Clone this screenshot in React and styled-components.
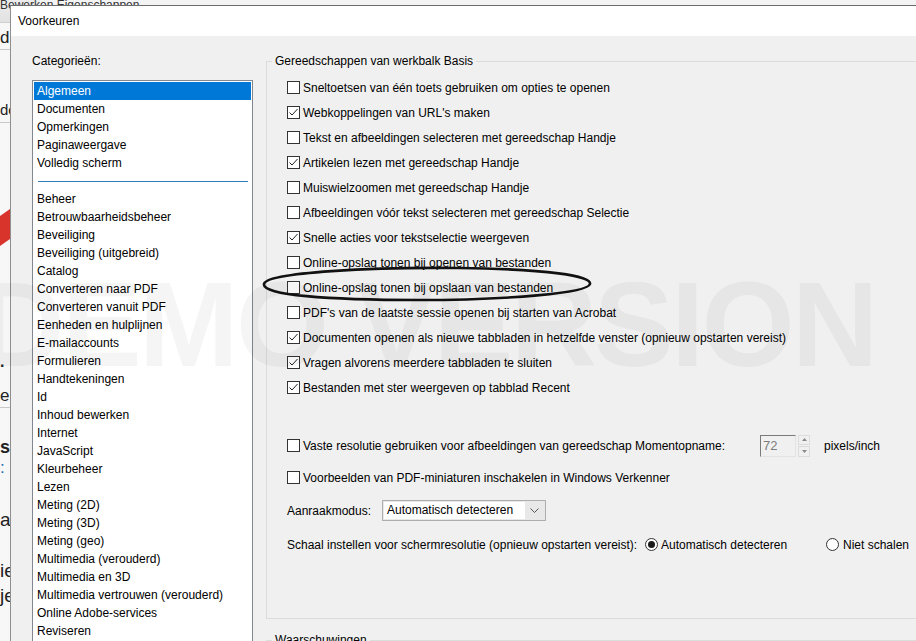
import React from "react";
import styled, { createGlobalStyle } from "styled-components";

const GlobalStyle = createGlobalStyle`
  html, body {
    margin: 0;
    padding: 0;
    background: #f0f0f0;
  }
`;

const Desktop = styled.div`
  position: relative;
  width: 916px;
  height: 641px;
  overflow: hidden;
  background: #f3f3f3;
  font-family: "Liberation Sans", Arial, sans-serif;
  font-size: 12px;
  color: #000;
`;

/* application window behind the dialog, only its left edge shows */
const BackApp = styled.div`
  display: flex;
  flex-direction: column;
  width: 40px;
  height: 100%;
  background: #f7f7f7;
`;

const BackMenu = styled.div`
  height: 22px;
  background: linear-gradient(#ececec, #e2e2e2);
  border-bottom: 1px solid #cfcfcf;
  font-size: 12px;
  line-height: 10px;
  color: #333;
  white-space: nowrap;
`;

const BackLine = styled.div`
  margin-top: ${(p) => p.$mt || 0}px;
  height: ${(p) => p.$h || 20}px;
  line-height: ${(p) => p.$h || 20}px;
  font-size: ${(p) => p.$size || 14}px;
  font-weight: ${(p) => (p.$bold ? 700 : 400)};
  color: ${(p) => p.$color || "#222"};
  border-bottom: ${(p) => (p.$rule ? "1px solid #c8c8c8" : "none")};
  white-space: nowrap;
  overflow: hidden;
`;

const RedMark = styled.div`
  margin-top: ${(p) => p.$mt}px;
  width: 26px;
  height: 30px;
  background: #d8342c;
  transform: skewY(-35deg);
  margin-left: -6px;
`;

const Dialog = styled.div`
  position: absolute;
  left: 10px;
  top: 5px;
  width: 940px;
  height: 680px;
  display: flex;
  flex-direction: column;
  background: #f0f0f0;
  border-top: 1px solid #6b6b6b;
  border-left: 1px solid #8e8e8e;
`;

const TitleBar = styled.div`
  height: 30px;
  flex: none;
  display: flex;
  align-items: center;
  padding-left: 7px;
  background: #fff;
  font-size: 12px;
`;

const Body = styled.div`
  flex: 1;
  display: flex;
  align-items: flex-start;
  gap: 13px;
  padding: 17px 0 0 21px;
`;

const LeftCol = styled.div`
  width: 221px;
  flex: none;
  display: flex;
  flex-direction: column;
`;

const Label = styled.div`
  height: 16px;
  line-height: 16px;
  margin-bottom: 11px;
`;

const ListBox = styled.div`
  height: 600px;
  background: #fff;
  border: 1px solid #828790;
  padding: 1px;
`;

const ListItem = styled.div`
  height: 18px;
  line-height: 18px;
  padding-left: 3px;
  white-space: nowrap;
  background: ${(p) => (p.$selected ? "#0078d7" : "transparent")};
  color: ${(p) => (p.$selected ? "#fff" : "#000")};
`;

const ListSeparator = styled.div`
  height: 18px;
  display: flex;
  align-items: center;
  padding: 0 3px 0 4px;

  &::after {
    content: "";
    flex: 1;
    height: 1px;
    background: #2f80bd;
  }
`;

const RightCol = styled.div`
  flex: none;
  display: flex;
  flex-direction: column;
  gap: 13px;
`;

const GroupBox = styled.fieldset`
  box-sizing: border-box;
  margin: 0;
  width: 700px;
  height: ${(p) => p.$h || 566}px;
  border: 1px solid #dcdcdc;
  padding: 6px 0 0 5px;
`;

const Legend = styled.legend`
  padding: 0 3px;
  height: 16px;
  line-height: 16px;
`;

const Options = styled.div`
  display: flex;
  flex-direction: column;
  padding-left: 15px;
`;

const Row = styled.div`
  height: 25px;
  display: flex;
  align-items: center;
  margin-top: ${(p) => p.$mt || 0}px;
  white-space: nowrap;
`;

const Box = styled.span`
  width: 13px;
  height: 13px;
  box-sizing: border-box;
  flex: none;
  border: 1px solid #333;
  background: #fff;
  display: flex;
  align-items: center;
  justify-content: center;
  margin-right: 3px;
`;

const RowText = styled.span`
  width: ${(p) => (p.$w ? `${p.$w}px` : "auto")};
  flex: none;
`;

const SpinField = styled.div`
  width: 36px;
  height: 22px;
  box-sizing: border-box;
  border: 1px solid #e3e3e3;
  border-top-color: #7a7a7a;
  border-left-color: #7a7a7a;
  background: #f0f0f0;
  color: #7d7d7d;
  line-height: 20px;
  padding-left: 2px;
  font-size: 13px;
`;

const SpinButtons = styled.div`
  width: 12px;
  height: 22px;
  margin-left: 2px;
  display: flex;
  flex-direction: column;
  gap: 1px;
  margin-right: 14px;
`;

const SpinHalf = styled.div`
  flex: 1;
  border: 1px solid #dcdcdc;
  display: flex;
  align-items: center;
  justify-content: center;
`;

const Select = styled.div`
  width: 164px;
  height: 21px;
  box-sizing: border-box;
  border: 1px solid #adadad;
  background: #e8e8e8;
  display: flex;
  align-items: center;
  padding: 1px;
`;

const SelectValue = styled.div`
  width: 141px;
  height: 100%;
  background: #fff;
  line-height: 17px;
  padding-left: 3px;
  box-sizing: border-box;
`;

const SelectArrow = styled.div`
  flex: 1;
  display: flex;
  align-items: center;
  justify-content: center;
`;

const Radio = styled.span`
  width: 13px;
  height: 13px;
  box-sizing: border-box;
  border: 1px solid #333;
  border-radius: 50%;
  background: #fff;
  display: flex;
  align-items: center;
  justify-content: center;
  margin-right: ${(p) => p.$gap || 3}px;
  flex: none;

  &::after {
    content: "";
    display: ${(p) => (p.$on ? "block" : "none")};
    width: 7px;
    height: 7px;
    border-radius: 50%;
    background: #1a1a1a;
  }
`;

const Watermark = styled.div`
  position: absolute;
  left: -22px;
  top: 264px;
  font-family: "Liberation Sans", Arial, sans-serif;
  font-weight: 700;
  font-size: 120px;
  line-height: 120px;
  letter-spacing: -3px;
  color: rgba(0, 0, 0, 0.04);
  white-space: nowrap;
  pointer-events: none;
`;

const Annotation = styled.svg`
  position: absolute;
  left: 258px;
  top: 262px;
  pointer-events: none;
`;

const Check = () => (
  <svg width="11" height="11" viewBox="0 0 11 11">
    <path d="M1.5 5.5 L4 8 L9.5 2" fill="none" stroke="#222" strokeWidth="1" />
  </svg>
);

const CheckBox = ({ on }) => <Box>{on ? <Check /> : null}</Box>;

const categoriesTop = [
  "Algemeen",
  "Documenten",
  "Opmerkingen",
  "Paginaweergave",
  "Volledig scherm",
];

const categories = [
  "Beheer",
  "Betrouwbaarheidsbeheer",
  "Beveiliging",
  "Beveiliging (uitgebreid)",
  "Catalog",
  "Converteren naar PDF",
  "Converteren vanuit PDF",
  "Eenheden en hulplijnen",
  "E-mailaccounts",
  "Formulieren",
  "Handtekeningen",
  "Id",
  "Inhoud bewerken",
  "Internet",
  "JavaScript",
  "Kleurbeheer",
  "Lezen",
  "Meting (2D)",
  "Meting (3D)",
  "Meting (geo)",
  "Multimedia (verouderd)",
  "Multimedia en 3D",
  "Multimedia vertrouwen (verouderd)",
  "Online Adobe-services",
  "Reviseren",
];

const options = [
  [false, "Sneltoetsen van één toets gebruiken om opties te openen"],
  [true, "Webkoppelingen van URL's maken"],
  [false, "Tekst en afbeeldingen selecteren met gereedschap Handje"],
  [true, "Artikelen lezen met gereedschap Handje"],
  [false, "Muiswielzoomen met gereedschap Handje"],
  [false, "Afbeeldingen vóór tekst selecteren met gereedschap Selectie"],
  [true, "Snelle acties voor tekstselectie weergeven"],
  [false, "Online-opslag tonen bij openen van bestanden"],
  [false, "Online-opslag tonen bij opslaan van bestanden"],
  [false, "PDF's van de laatste sessie openen bij starten van Acrobat"],
  [true, "Documenten openen als nieuwe tabbladen in hetzelfde venster (opnieuw opstarten vereist)"],
  [true, "Vragen alvorens meerdere tabbladen te sluiten"],
  [true, "Bestanden met ster weergeven op tabblad Recent"],
];

export default function App() {
  return (
    <>
      <GlobalStyle />
      <Desktop>
        <BackApp>
          <BackMenu>Bewerken Eigenschappen</BackMenu>
          <BackLine $mt={4} $h={22} $size={17} $rule>
            ds
          </BackLine>
          <BackLine $mt={48} $h={24} $size={15} $rule>
            de
          </BackLine>
          <RedMark $mt={88} />
          <BackLine $mt={112} $h={18} $size={16} $bold>
            .
          </BackLine>
          <BackLine $mt={14} $h={22} $size={17} $rule>
            er
          </BackLine>
          <BackLine $mt={28} $h={22} $size={18} $bold>
            s
          </BackLine>
          <BackLine $h={20} $size={17} $color="#2a6fb0">
            :
          </BackLine>
          <BackLine $mt={28} $h={28} $size={19}>
            a
          </BackLine>
          <BackLine $mt={24} $h={26} $size={19}>
            ie
          </BackLine>
          <BackLine $h={24} $size={19}>
            je
          </BackLine>
        </BackApp>

        <Dialog>
          <TitleBar>Voorkeuren</TitleBar>
          <Body>
            <LeftCol>
              <Label>Categorieën:</Label>
              <ListBox>
                {categoriesTop.map((c, i) => (
                  <ListItem key={c} $selected={i === 0}>
                    {c}
                  </ListItem>
                ))}
                <ListSeparator />
                {categories.map((c) => (
                  <ListItem key={c}>{c}</ListItem>
                ))}
              </ListBox>
            </LeftCol>

            <RightCol>
              <GroupBox>
                <Legend>Gereedschappen van werkbalk Basis</Legend>
                <Options>
                  {options.map(([on, text]) => (
                    <Row key={text}>
                      <CheckBox on={on} />
                      <RowText>{text}</RowText>
                    </Row>
                  ))}

                  <Row $mt={33}>
                    <CheckBox />
                    <RowText $w={457}>
                      Vaste resolutie gebruiken voor afbeeldingen van gereedschap Momentopname:
                    </RowText>
                    <SpinField>72</SpinField>
                    <SpinButtons>
                      <SpinHalf>
                        <svg width="5" height="3" viewBox="0 0 5 3">
                          <path d="M0 3 L2.5 0 L5 3 Z" fill="#8a8a8a" />
                        </svg>
                      </SpinHalf>
                      <SpinHalf>
                        <svg width="5" height="3" viewBox="0 0 5 3">
                          <path d="M0 0 L2.5 3 L5 0 Z" fill="#8a8a8a" />
                        </svg>
                      </SpinHalf>
                    </SpinButtons>
                    <RowText>pixels/inch</RowText>
                  </Row>

                  <Row $mt={7}>
                    <CheckBox />
                    <RowText>Voorbeelden van PDF-miniaturen inschakelen in Windows Verkenner</RowText>
                  </Row>

                  <Row $mt={8}>
                    <RowText $w={95}>Aanraakmodus:</RowText>
                    <Select>
                      <SelectValue>Automatisch detecteren</SelectValue>
                      <SelectArrow>
                        <svg width="9" height="5" viewBox="0 0 9 5">
                          <path d="M0.5 0.5 L4.5 4.5 L8.5 0.5" fill="none" stroke="#555" strokeWidth="1" />
                        </svg>
                      </SelectArrow>
                    </Select>
                  </Row>

                  <Row $mt={9}>
                    <RowText $w={358}>
                      Schaal instellen voor schermresolutie (opnieuw opstarten vereist):
                    </RowText>
                    <Radio $on />
                    <RowText $w={165}>Automatisch detecteren</RowText>
                    <Radio $gap={4} />
                    <RowText>Niet schalen</RowText>
                  </Row>
                </Options>
              </GroupBox>

              <GroupBox $h={60}>
                <Legend>Waarschuwingen</Legend>
              </GroupBox>
            </RightCol>
          </Body>
        </Dialog>

        <Watermark>DEMO VERSION</Watermark>

        <Annotation width="340" height="44" viewBox="0 0 340 44">
          <path
            d="M6 22 C 8 10, 120 5, 200 6 C 290 7, 334 14, 332 22 C 330 31, 250 38, 160 38 C 70 38, 4 33, 6 22 Z"
            fill="none"
            stroke="#111"
            strokeWidth="2.6"
          />
        </Annotation>
      </Desktop>
    </>
  );
}
